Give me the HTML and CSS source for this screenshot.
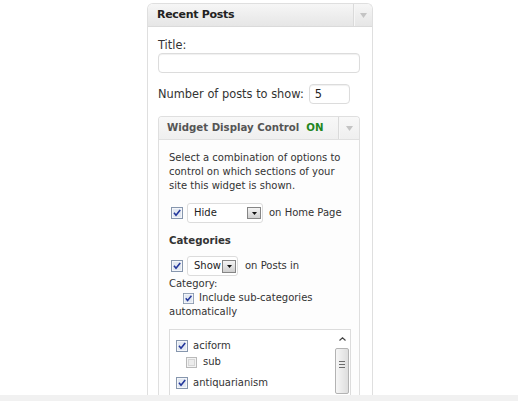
FILE: index.html
```html
<!DOCTYPE html>
<html>
<head>
<meta charset="utf-8">
<title>Recent Posts widget</title>
<link rel="stylesheet" href="styles.css">
</head>
<body>
<div class="page">
  <div class="stage">
    <div class="panel">
      <div class="panel-head">
        <span class="panel-title">Recent Posts</span>
        <span class="toggle"><svg width="7" height="5" viewBox="0 0 7 5"><polygon points="0,0 7,0 3.5,5" fill="#c4c4c4"/></svg></span>
      </div>
      <div class="panel-body">
        <div class="label">Title:</div>
        <div class="textbox wide"></div>
        <div class="num-row"><span>Number of posts to show:</span><div class="textbox num">5</div></div>

        <div class="wdc">
          <div class="wdc-head">
            <span class="wdc-title">Widget Display Control<b class="on">ON</b></span>
            <span class="toggle inner"><svg width="7" height="5" viewBox="0 0 7 5"><polygon points="0,0 7,0 3.5,5" fill="#c4c4c4"/></svg></span>
          </div>
          <div class="wdc-body">
            <p class="desc">Select a combination of options to control on which sections of your site this widget is shown.</p>

            <div class="row first">
              <svg class="cb" width="12" height="12" viewBox="0 0 12 12"><rect x="0.5" y="0.5" width="11" height="11" fill="#e2e8f1" stroke="#8696ad"/><rect x="1.5" y="1.5" width="9" height="9" fill="none" stroke="#f4f6fa"/><path d="M3 5.8l2 2.4L9.2 3" fill="none" stroke="#23379c" stroke-width="1.6"/></svg>
              <div class="select hide"><span>Hide</span><span class="dd"><svg width="5" height="3" viewBox="0 0 5 3"><polygon points="0,0 5,0 2.5,3" fill="#111"/></svg></span></div>
              <span class="after">on Home Page</span>
            </div>

            <div class="cat-head">Categories</div>

            <div class="row second">
              <svg class="cb" width="12" height="12" viewBox="0 0 12 12"><rect x="0.5" y="0.5" width="11" height="11" fill="#e2e8f1" stroke="#8696ad"/><rect x="1.5" y="1.5" width="9" height="9" fill="none" stroke="#f4f6fa"/><path d="M3 5.8l2 2.4L9.2 3" fill="none" stroke="#23379c" stroke-width="1.6"/></svg>
              <div class="select show"><span>Show</span><span class="dd"><svg width="5" height="3" viewBox="0 0 5 3"><polygon points="0,0 5,0 2.5,3" fill="#111"/></svg></span></div>
              <span class="after posts">on Posts in</span>
            </div>
            <div class="line">Category:</div>
            <div class="line sub-inc">
              <svg class="cb" width="11" height="11" viewBox="0 0 12 12"><rect x="0.5" y="0.5" width="11" height="11" fill="#e2e8f1" stroke="#8696ad"/><rect x="1.5" y="1.5" width="9" height="9" fill="none" stroke="#f4f6fa"/><path d="M3 5.8l2 2.4L9.2 3" fill="none" stroke="#23379c" stroke-width="1.6"/></svg>
              <span>Include sub-categories</span>
            </div>
            <div class="line">automatically</div>

            <div class="catlist">
              <ul class="items">
                <li class="item">
                  <svg class="cb" width="12" height="12" viewBox="0 0 12 12"><rect x="0.5" y="0.5" width="11" height="11" fill="#e2e8f1" stroke="#8696ad"/><rect x="1.5" y="1.5" width="9" height="9" fill="none" stroke="#f4f6fa"/><path d="M3 5.8l2 2.4L9.2 3" fill="none" stroke="#23379c" stroke-width="1.6"/></svg>
                  <span>aciform</span>
                </li>
                <li class="item child">
                  <svg class="cb" width="11" height="11" viewBox="0 0 11 11"><rect x="0.5" y="0.5" width="10" height="10" fill="#f3f3f3" stroke="#b9b9b9"/><rect x="2.5" y="2.5" width="6" height="6" fill="#ececec" stroke="#d6d6d6"/></svg>
                  <span>sub</span>
                </li>
                <li class="item gap">
                  <svg class="cb" width="12" height="12" viewBox="0 0 12 12"><rect x="0.5" y="0.5" width="11" height="11" fill="#e2e8f1" stroke="#8696ad"/><rect x="1.5" y="1.5" width="9" height="9" fill="none" stroke="#f4f6fa"/><path d="M3 5.8l2 2.4L9.2 3" fill="none" stroke="#23379c" stroke-width="1.6"/></svg>
                  <span>antiquarianism</span>
                </li>
              </ul>
              <div class="scroll">
                <div class="up"><svg width="7" height="4" viewBox="0 0 7 4"><polyline points="0.5,3.5 3.5,0.8 6.5,3.5" fill="none" stroke="#444" stroke-width="1.2"/></svg></div>
                <div class="thumb"><span class="grip"></span><span class="grip"></span><span class="grip"></span></div>
              </div>
            </div>
          </div>
        </div>
      </div>
    </div>
  </div>
  <div class="footer"></div>
</div>
</body>
</html>
```

FILE: styles.css
```css
* { box-sizing: border-box; margin: 0; padding: 0; }
body { margin: 0; background: #fff; font-family: "DejaVu Sans", Verdana, sans-serif; color: #333; }

.page { display: flex; flex-direction: column; height: 401px; overflow: hidden; }
.stage { height: 395px; overflow: hidden; padding: 3px 0 0 147px; }
.footer { height: 6px; background: #f1f1f1; }

.panel { width: 226px; min-height: 420px; border: 1px solid #dfdfdf; border-bottom: none; border-radius: 6px 6px 0 0; background: #fff; }
.panel-head { display: flex; height: 23px; background: linear-gradient(#f6f6f6, #e6e6e6); border-bottom: 1px solid #dadada; border-radius: 5px 5px 0 0; }
.panel-title { flex: 1; padding-left: 9px; font-weight: bold; font-size: 11px; letter-spacing: -0.3px; line-height: 22px; color: #222; }
.toggle { width: 19px; display: flex; align-items: center; justify-content: center; border-left: 1px solid #dadada; box-shadow: inset 1px 0 #f6f6f6; }
.toggle.inner { width: 21px; }

.panel-body { padding: 0 12px 0 10px; }
.label { margin-top: 11px; font-size: 11.4px; line-height: 14px; color: #333; }
.textbox { height: 20px; border: 1px solid #dcdcdc; border-radius: 4px; background: #fff; box-shadow: inset 0 1px 1px #f0f0f0; }
.textbox.wide { margin-top: 1px; }
.num-row { margin-top: 11px; display: flex; align-items: center; gap: 5px; height: 20px; font-size: 11.4px; }
.textbox.num { width: 41px; padding-left: 5px; font-size: 11.4px; line-height: 18px; color: #222; }

.wdc { margin-top: 12px; border: 1px solid #dfdfdf; border-bottom: none; border-radius: 4px 4px 0 0; background: #fdfdfd; min-height: 300px; }
.wdc-head { display: flex; height: 23px; background: linear-gradient(#f8f8f8, #efefef); border-bottom: 1px solid #e0e0e0; border-radius: 3px 3px 0 0; }
.wdc-title { flex: 1; padding-left: 8px; font-weight: bold; font-size: 10.2px; line-height: 22px; color: #555; }
.on { margin-left: 7px; color: #23861f; }

.wdc-body { padding: 11px 8px 0 10px; font-size: 10px; line-height: 14px; color: #333; }
.desc { font-size: 10px; line-height: 14px; }

.row { display: flex; align-items: center; height: 20px; }
.row.first { margin-top: 10px; }
.row.second { margin-top: 8px; }
.row .cb { margin-left: 2px; flex: none; }
.select { margin-left: 4px; height: 20px; display: flex; align-items: center; justify-content: space-between; padding: 0 1px 0 6px; border: 1px solid #dcdcdc; border-radius: 3px; background: #fff; color: #222; }
.select.hide { width: 76px; }
.select.show { width: 51px; }
.dd { width: 14px; height: 12px; display: flex; align-items: center; justify-content: center; border: 1px solid #858585; background: linear-gradient(#f4f4f4, #cfcfcf); flex: none; }
.select.show .dd { height: 13px; margin-left: -1px; }
.after { margin-left: 6px; }
.after.posts { margin-left: 7px; }

.cat-head { margin-top: 11px; font-weight: bold; font-size: 10.2px; line-height: 14px; color: #333; }
.line { line-height: 14px; }
.row + .line { margin-top: 1px; }
.sub-inc { display: flex; align-items: center; padding-left: 14px; }
.sub-inc .cb { margin-right: 5px; }

.catlist { margin-top: 10px; height: 120px; display: flex; border: 1px solid #dcdcdc; background: #fff; }
.items { flex: 1; list-style: none; padding: 8px 0 0 6px; }
.item { display: flex; align-items: center; height: 16px; }
.item .cb { flex: none; margin-right: 5px; }
.item.child { padding-left: 10px; }
.item.child .cb { margin-right: 6px; }
.item.gap { margin-top: 5px; }

.scroll { width: 16px; display: flex; flex-direction: column; align-items: center; }
.up { height: 17px; width: 100%; display: flex; align-items: center; justify-content: center; }
.thumb { margin-top: 1px; width: 14px; height: 46px; border: 1px solid #b3b3b3; border-radius: 2px; background: linear-gradient(to right, #f6f6f6, #dedede); display: flex; flex-direction: column; align-items: center; padding-top: 12px; gap: 2px; }
.grip { width: 6px; height: 1px; background: #6d6d6d; }
```
